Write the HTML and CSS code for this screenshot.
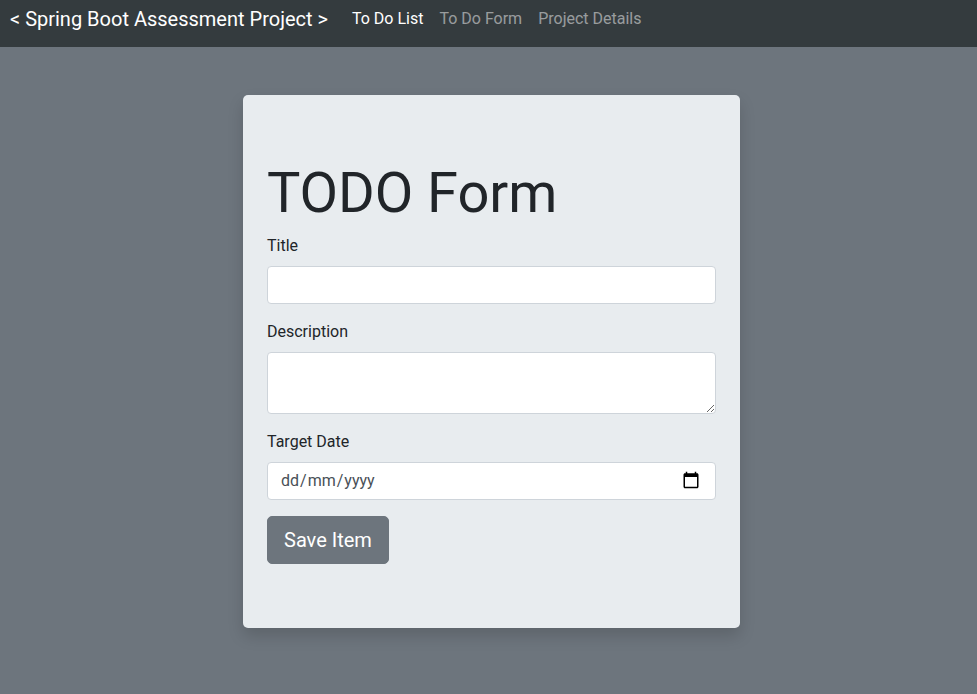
FILE: index.html
```html
<!DOCTYPE html>
<html lang="en-GB">
<head>
<meta charset="utf-8">
<title>TODO Form</title>
<link rel="stylesheet" href="styles.css">
</head>
<body>
<nav class="navbar">
  <a class="brand">&lt; Spring Boot Assessment Project &gt;</a>
  <ul class="nav">
    <li class="active">To Do List</li>
    <li>To Do Form</li>
    <li>Project Details</li>
  </ul>
</nav>
<main class="card">
  <h1>TODO Form</h1>
  <form>
    <div class="group"><label for="title">Title</label><input class="control" id="title" type="text"></div>
    <div class="group"><label for="desc">Description</label><textarea class="control area" id="desc" rows="2"></textarea></div>
    <div class="group"><label>Target Date</label>
      <div class="control date"><div class="fields"><span>dd</span>/<span>mm</span>/<span>yyyy</span></div>
        <svg width="18" height="18" viewBox="0 0 24 24"><path d="M20 3h-1V1h-2v2H7V1H5v2H4c-1.1 0-2 .9-2 2v16c0 1.1.9 2 2 2h16c1.1 0 2-.9 2-2V5c0-1.1-.9-2-2-2zm0 18H4V8h16v13z"/></svg>
      </div>
    </div>
    <button class="save" type="button">Save Item</button>
  </form>
</main>
</body>
</html>
```
FILE: styles.css
```css
* { box-sizing: border-box; }
html, body { height: 100%; }
body {
  margin: 0;
  background: #6d757d;
  color: #212529;
  font: 400 16px/24px Roboto, sans-serif;
  overflow: hidden;
}
.navbar {
  display: flex;
  height: 47px;
  padding: 0 10px;
  background: #343b3e;
}
.brand {
  margin-right: 24px;
  padding-top: 4px;
  color: #fff;
  font-size: 20px;
  line-height: 30px;
}
.nav {
  display: flex;
  gap: 16px;
  margin: 0;
  padding: 7px 0 0;
  list-style: none;
  color: rgba(255, 255, 255, .5);
}
.active { color: #fff; }
.card {
  width: 497px;
  height: 533px;
  margin: 48px auto 0 243px;
  padding: 64px 24px;
  border-radius: 5px;
  background: #e8ecef;
  box-shadow: 0 8px 16px rgba(0, 0, 0, .15);
}
h1 { margin: 0; padding: 1px 0 7px; font-size: 56px; line-height: 67px; font-weight: 400; letter-spacing: -.05px; }
.group { margin-bottom: 16px; }
label { display: block; margin: 0 0 8px; }
.control {
  display: block;
  width: 100%;
  height: 38px;
  padding: 6px 12px;
  border: 1px solid #ced4da;
  border-radius: 4px;
  background: #fff;
  color: #495057;
  font: 400 16px/24px Roboto, sans-serif;
}
.area { height: 62px; resize: vertical; }
.date { display: flex; justify-content: space-between; align-items: center; }
.date span { padding: 0 1px; }
.date svg { margin: 0 3.5px 2px 0; }
.save {
  display: block;
  height: 48px;
  padding: 8px 16px;
  border: 1px solid #6d757d;
  border-radius: 5px;
  background: #6d757d;
  color: #fff;
  font: 400 20px/30px Roboto, sans-serif;
}
```
